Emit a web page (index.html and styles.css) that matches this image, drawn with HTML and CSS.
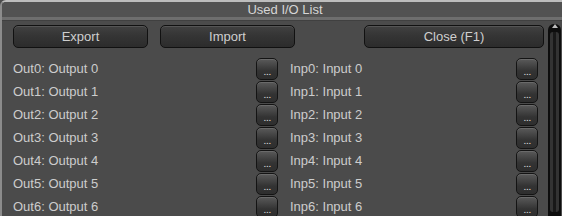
FILE: index.html
```html
<!DOCTYPE html>
<html>
<head>
<meta charset="utf-8">
<link rel="stylesheet" href="styles.css">
</head>
<body>
<div class="window">
  <div class="titlebar">Used I/O List</div>
  <div class="sep"></div>
  <div class="content">
    <div class="main">
      <div class="toolbar">
        <button class="btn btn-export">Export</button>
        <button class="btn btn-import">Import</button>
        <button class="btn btn-close">Close (F1)</button>
      </div>
      <div class="grid">
        <div class="cell"><span class="label">Out0: Output 0</span><button class="dots">...</button></div>
        <div class="cell"><span class="label">Inp0: Input 0</span><button class="dots">...</button></div>
        <div class="cell"><span class="label">Out1: Output 1</span><button class="dots">...</button></div>
        <div class="cell"><span class="label">Inp1: Input 1</span><button class="dots">...</button></div>
        <div class="cell"><span class="label">Out2: Output 2</span><button class="dots">...</button></div>
        <div class="cell"><span class="label">Inp2: Input 2</span><button class="dots">...</button></div>
        <div class="cell"><span class="label">Out3: Output 3</span><button class="dots">...</button></div>
        <div class="cell"><span class="label">Inp3: Input 3</span><button class="dots">...</button></div>
        <div class="cell"><span class="label">Out4: Output 4</span><button class="dots">...</button></div>
        <div class="cell"><span class="label">Inp4: Input 4</span><button class="dots">...</button></div>
        <div class="cell"><span class="label">Out5: Output 5</span><button class="dots">...</button></div>
        <div class="cell"><span class="label">Inp5: Input 5</span><button class="dots">...</button></div>
        <div class="cell"><span class="label">Out6: Output 6</span><button class="dots">...</button></div>
        <div class="cell"><span class="label">Inp6: Input 6</span><button class="dots">...</button></div>
      </div>
    </div>
    <div class="scrollbar">
      <div class="arrow"></div>
      <div class="track"></div>
    </div>
  </div>
</div>
</body>
</html>
```

FILE: styles.css
```css
html, body {
  margin: 0;
  padding: 0;
  background: #4b4b4b;
  overflow: hidden;
}

.window {
  width: 560px;
  height: 214px;
  border-top: 2px solid #bdbdbd;
  border-left: 2px solid #8c8c8c;
  border-top-left-radius: 6px;
  background: #4b4b4b;
  font-family: "Liberation Sans", Arial, sans-serif;
  color: #cfcfcf;
  overflow: hidden;
}

.titlebar {
  height: 15px;
  line-height: 16px;
  font-size: 13px;
  text-align: center;
  padding-left: 6px;
  background: #525252;
  color: #d6d6d6;
}

.sep {
  height: 3px;
  background: #6e6e6e;
  border-bottom: 1px solid #404040;
}

.content {
  display: flex;
  height: 195px;
}

.main {
  width: 546px;
  padding-left: 11px;
  box-sizing: border-box;
}

.toolbar {
  display: flex;
  padding-top: 4px;
  height: 23px;
}

.btn {
  height: 23px;
  box-sizing: border-box;
  border: 1px solid #111;
  border-radius: 5px;
  background: linear-gradient(#414141, #353535 45%, #2c2c2c);
  box-shadow: inset 0 1px 0 #555;
  color: #cfcfcf;
  font-family: "Liberation Sans", Arial, sans-serif;
  font-size: 13px;
  padding: 0;
  line-height: 20px;
}

.btn-export { width: 135px; }
.btn-import { width: 135px; margin-left: 12px; }
.btn-close { width: 180px; margin-left: 69px; }

.grid {
  display: grid;
  grid-template-columns: 265px 248px;
  column-gap: 12px;
  grid-auto-rows: 23px;
  margin-top: 9px;
}

.cell {
  display: flex;
  align-items: center;
  justify-content: space-between;
  height: 23px;
}

.label {
  font-size: 13px;
  color: #cdcdcd;
  padding-bottom: 1px;
}

.dots {
  width: 22px;
  height: 22px;
  box-sizing: border-box;
  border: 1px solid #141414;
  border-radius: 5px;
  background: linear-gradient(#5a5a5a, #404040 40%, #333 60%, #2e2e2e);
  box-shadow: inset 0 1px 0 #6a6a6a;
  color: #d0d0d0;
  font-family: "Liberation Sans", Arial, sans-serif;
  font-size: 8px;
  font-weight: bold;
  letter-spacing: 0.3px;
  padding: 8px 0 0 1px;
  line-height: 8px;
}

.scrollbar {
  position: relative;
  width: 13px;
  margin-top: 3px;
  background: #0d0d0d;
  border-radius: 6px 6px 0 0;
}

.arrow {
  position: absolute;
  left: 4px;
  top: 0px;
  width: 0;
  height: 0;
  border-left: 3px solid transparent;
  border-right: 3px solid transparent;
  border-bottom: 4px solid #bdbdbd;
}

.track {
  position: absolute;
  left: 2px;
  right: 2px;
  top: 8px;
  bottom: 4px;
  background: linear-gradient(90deg, #333 0 3px, #181818 3px 6px, #333 6px);
  border-radius: 3px;
}
```
